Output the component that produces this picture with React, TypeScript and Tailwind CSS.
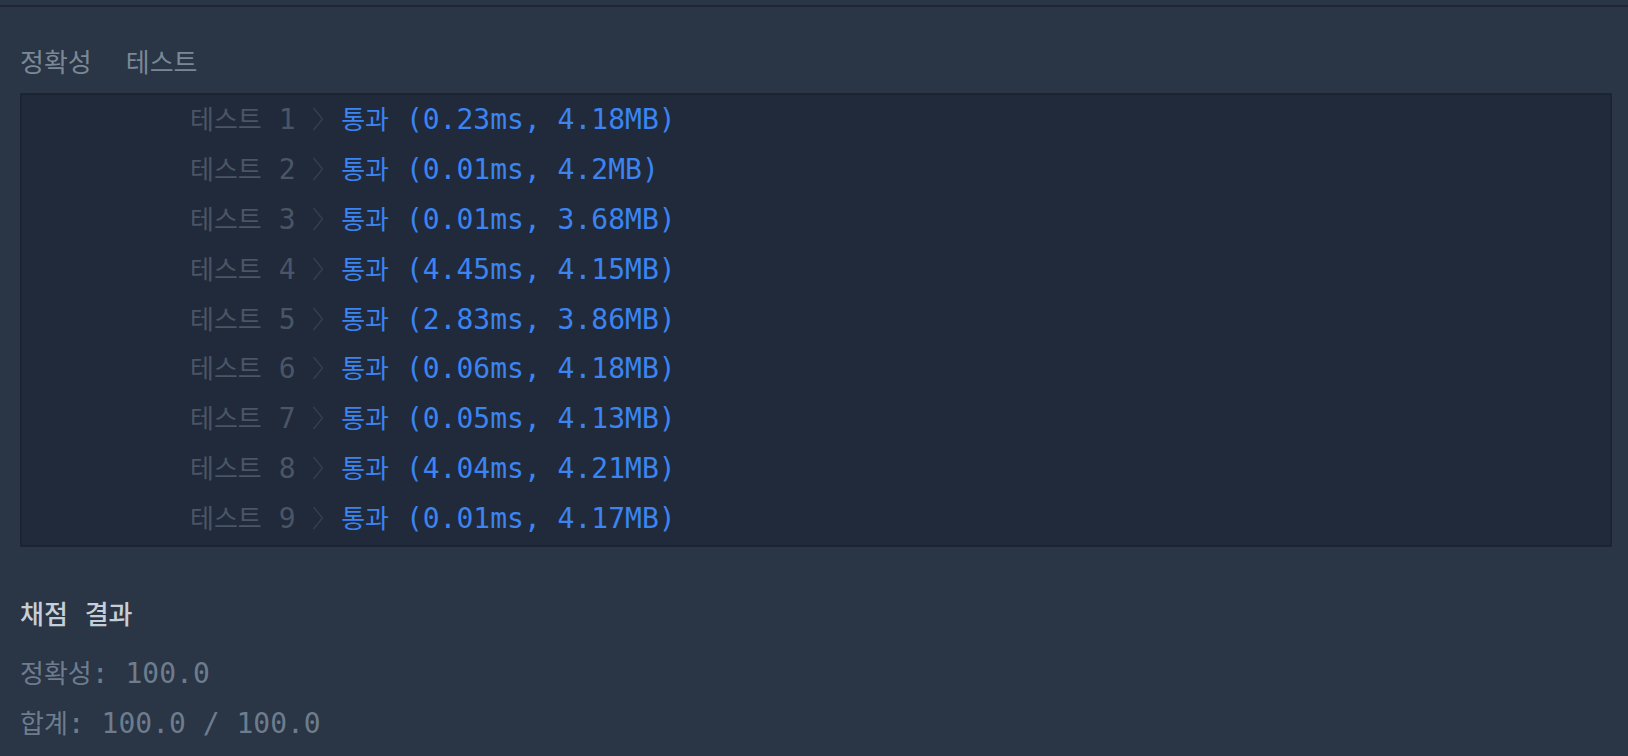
const tests = [
  { n: 1, time: '0.23ms', mem: '4.18MB' },
  { n: 2, time: '0.01ms', mem: '4.2MB' },
  { n: 3, time: '0.01ms', mem: '3.68MB' },
  { n: 4, time: '4.45ms', mem: '4.15MB' },
  { n: 5, time: '2.83ms', mem: '3.86MB' },
  { n: 6, time: '0.06ms', mem: '4.18MB' },
  { n: 7, time: '0.05ms', mem: '4.13MB' },
  { n: 8, time: '4.04ms', mem: '4.21MB' },
  { n: 9, time: '0.01ms', mem: '4.17MB' },
];

function Ko({ children, className = '' }: { children: React.ReactNode; className?: string }) {
  return (
    <span className={`font-['Noto_Sans_CJK_KR',sans-serif] text-[26px] leading-none ${className}`}>
      {children}
    </span>
  );
}

function Chevron() {
  return (
    <svg width="12" height="24" viewBox="0 0 12 24" className="inline-block align-[-2px]">
      <polyline points="1.5,1 10.5,12 1.5,23" fill="none" stroke="#343f50" strokeWidth="1.4" />
    </svg>
  );
}

export default function App() {
  return (
    <div className="min-h-screen w-full bg-[#2a3546] font-['DejaVu_Sans_Mono','Noto_Sans_CJK_KR',monospace] text-[28px]">
      <div className="h-[5px]" />
      <div className="h-[2px] bg-[#1f2533]" />

      <div className="mt-[36px] mb-[10px] ml-5 h-[40px] leading-[40px] text-[#7a8896]">
        <Ko>정확성</Ko>
        <span className="inline-block w-[34px]" />
        <Ko>테스트</Ko>
      </div>

      <div className="ml-5 mr-4 border-2 border-[#1c2331] bg-[#212a3a] pb-[1px] pl-[168px]">
        {tests.map((t) => (
          <div key={t.n} className="h-[49.9px] leading-[49.9px] whitespace-pre">
            <span className="text-[#4a5566]">
              <Ko>테스트</Ko>{' '}{t.n}
            </span>{' '}
            <Chevron />{' '}
            <span className="text-[#3b84f2]">
              <Ko>통과</Ko>{` (${t.time}, ${t.mem})`}
            </span>
          </div>
        ))}
      </div>

      <div className="ml-5 mt-[43px] h-[50px] leading-[50px] whitespace-pre text-[#c6ced8]">
        <Ko className="font-medium">채점</Ko>{' '}<Ko className="font-medium">결과</Ko>
      </div>
      <div className="ml-5 mt-[9px] h-[50px] leading-[50px] whitespace-pre text-[#6d7d8d]">
        <Ko>정확성</Ko>{': 100.0'}
      </div>
      <div className="ml-5 h-[50px] leading-[50px] whitespace-pre text-[#6d7d8d]">
        <Ko>합계</Ko>{': 100.0 / 100.0'}
      </div>
    </div>
  );
}
